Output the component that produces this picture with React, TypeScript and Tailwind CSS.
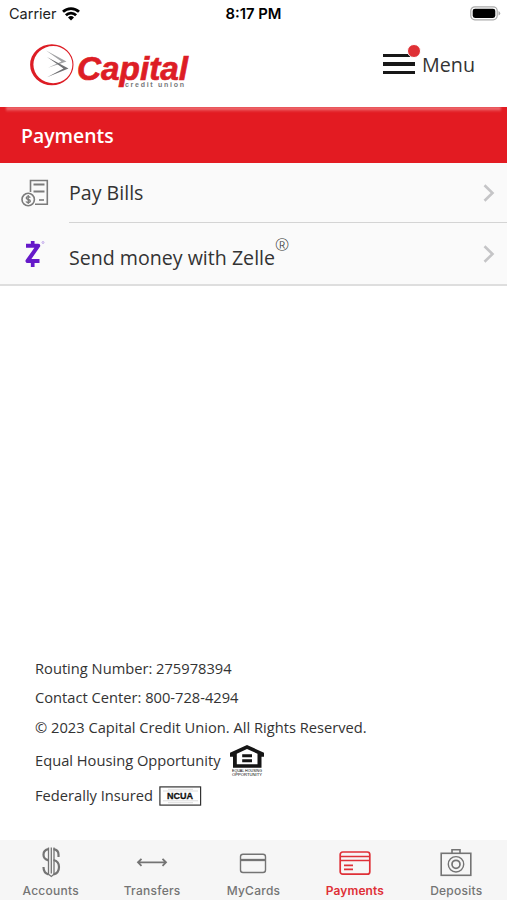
import React from 'react';

const Logo: React.FC = () => (
  <svg width="166" height="52" viewBox="0 0 166 52" className="block">
    <path
      fill="#dd1d25"
      fillRule="evenodd"
      d="M22.800 1.200a21.700 20.500 0 1 0 0 41a21.700 20.500 0 1 0 0-41M24.200 3a19.200 18.600 0 1 1 0 37.200a19.800 18.600 0 1 1 0-37.200"
    />
    <path fill="#a2a3a5" d="M17 7.500l20.500 11-18.500 6.200 13.500-6.200z" />
    <path fill="#6f7073" d="M18 14l21.500 11.500-21.500 8.800 16.500-8.800z" />
    <text
      x="48"
      y="37"
      textLength="111"
      lengthAdjust="spacingAndGlyphs"
      fill="#dd1d25"
      stroke="#dd1d25"
      strokeWidth=".7"
      className="font-['Liberation_Sans',sans-serif] text-[33.500px] font-bold italic"
    >
      Capital
    </text>
    <text
      x="96"
      y="44"
      textLength="59"
      fill="#77787b"
      className="font-['Liberation_Sans',sans-serif] text-[7px] font-bold"
    >
      credit union
    </text>
  </svg>
);

const WifiIcon: React.FC = () => (
  <svg width="18" height="14" viewBox="0 0 18 14" fill="none" stroke="#000" strokeWidth="2.700">
    <path d="M1 4.800a11.500 11.500 0 0 1 16 0" />
    <path d="M3.900 8.200a7.200 7.200 0 0 1 10.200 0" />
    <path d="M6 10.500a4.300 4.300 0 0 1 6 0L9 13.500z" fill="#000" stroke="none" />
  </svg>
);

const BatteryIcon: React.FC = () => (
  <svg width="31" height="15" viewBox="0 0 31 15">
    <rect x="0.800" y="0.800" width="26.400" height="13" rx="4" fill="#fff" stroke="#aaa" strokeWidth="1.200" />
    <rect x="2.700" y="2.700" width="22.600" height="9.200" rx="2.300" />
    <path d="M28.500 5v4.600q1.700-.7 1.700-2.300t-1.700-2.300" fill="#aaa" />
  </svg>
);

const BillIcon: React.FC = () => (
  <svg width="28" height="28" viewBox="0 0 28 28" fill="none" stroke="#7b7b7b" strokeWidth="1.600">
    <path d="M9.500 13V1.500h16.800v23.700H14" />
    <path d="M12.500 5.500h11M12.500 12.500h11" strokeWidth="2" />
    <path d="M18 21h5" />
    <circle cx="7.200" cy="20.500" r="6.200" />
    <path
      d="M9.300 18.600q-.6-1-2.100-1-2 0-2 1.400c0 1.100.9 1.300 2 1.500s2.100.5 2.100 1.600q0 1.400-2.100 1.400-1.600 0-2.300-1M7.200 16v9"
      strokeWidth="1.300"
    />
  </svg>
);

const ZelleIcon: React.FC = () => (
  <svg width="28" height="28" viewBox="0 0 28 28" fill="none" stroke="#6519c9" strokeLinejoin="round">
    <path d="M5 5.700h12.300L6.500 21h12" strokeWidth="4" />
    <path d="M11.700 1v5M11.700 21v6" strokeWidth="3.700" />
    <circle cx="22" cy="2.500" r="1" strokeWidth=".7" stroke="#aa88e5" />
  </svg>
);

const Chevron: React.FC = () => (
  <svg width="12" height="18" viewBox="0 0 12 18" fill="none" stroke="#c5c5c7" strokeWidth="2.600">
    <path d="M1.500 1.200L9.500 9l-8 7.800" />
  </svg>
);

const HousingIcon: React.FC = () => (
  <svg width="36" height="34" viewBox="0 0 36 34">
    <path
      fill="#151515"
      fillRule="evenodd"
      d="M18 1L1 8.700v4h3v11.100h28.500V12.700h2.500v-4zM18 5l10.500 4.800v10.400H7.800V9.800z"
    />
    <path fill="#151515" d="M13.200 10.300h9.800v2.900h-9.800zM13.200 15.300h9.800v2.900h-9.800z" />
    <text x="3" y="28.300" textLength="30" lengthAdjust="spacingAndGlyphs" className="font-['Liberation_Sans',sans-serif] text-[3.200px]">
      EQUAL HOUSING
    </text>
    <text x="3" y="32.300" textLength="30" lengthAdjust="spacingAndGlyphs" className="font-['Liberation_Sans',sans-serif] text-[3.200px]">
      OPPORTUNITY
    </text>
  </svg>
);

const NcuaIcon: React.FC = () => (
  <svg width="43" height="20" viewBox="0 0 43 20" fill="none" stroke="#333">
    <rect x="0.900" y="0.900" width="40.700" height="18.200" strokeWidth="1.200" />
    <path d="M4 5h35M9 3.300h25M4 14.800h35M9 16.700h25" strokeWidth=".4" stroke="#aaa" />
    <text
      x="8"
      y="13.200"
      textLength="26"
      lengthAdjust="spacingAndGlyphs"
      fill="#111"
      stroke="#111"
      strokeWidth=".3"
      className="font-['Liberation_Sans',sans-serif] text-[9px] font-bold"
    >
      NCUA
    </text>
  </svg>
);

const tabs = [
  {
    label: 'Accounts',
    active: false,
    icon: (
      <>
        <path
          d="M23.500 12V9.500Q23.500 5 18.500 4.200M13.500 4.200Q8.500 5 8.500 9.800q0 4.500 5 5.500M18.500 15q5.500 1.200 5.500 7 0 6-5.500 7.500M8.500 22q0 6 5 7.500"
          strokeWidth="2.200"
        />
        <path d="M13.500 2.500v26.700l2.800 2.300 2.700-2.300V2.500M16.300 2.500v26" strokeWidth="1.300" />
      </>
    ),
  },
  {
    label: 'Transfers',
    active: false,
    icon: <path d="M2 17.300h28M5.500 13.800l-3.500 3.500 3.500 3.500M26.500 13.800l3.500 3.500-3.500 3.500" strokeWidth="1.800" />,
  },
  {
    label: 'MyCards',
    active: false,
    icon: (
      <>
        <rect x="3.500" y="9.200" width="25" height="18.300" rx="2.500" />
        <path d="M3.500 15h25" strokeWidth="2.300" />
      </>
    ),
  },
  {
    label: 'Payments',
    active: true,
    icon: (
      <>
        <rect x="1.200" y="7" width="29.600" height="22.200" rx="2.500" strokeWidth="1.700" />
        <path d="M1 11.500h30M1 15.500h30M5 20.300h9M5 24.300h9" strokeWidth="1.700" />
      </>
    ),
  },
  {
    label: 'Deposits',
    active: false,
    icon: (
      <>
        <rect x="1.200" y="8.300" width="29.600" height="22" strokeWidth="1.600" />
        <path d="M12 8.300V4.800h8v3.500" strokeWidth="1.600" />
        <circle cx="16" cy="19.300" r="7.700" />
        <circle cx="16" cy="19.300" r="4" strokeWidth="1.700" />
      </>
    ),
  },
];

const App: React.FC = () => {
  return (
    <div className="flex h-[900px] w-[507px] flex-col overflow-hidden bg-white font-['Open_Sans',sans-serif] text-[#333]">
      <div className="grid h-7 grid-cols-3 items-center font-['Inter',sans-serif] text-[14px] leading-none text-black">
        <div className="flex items-center gap-[5px] pl-[9px]">
          <span className="text-[14.500px] text-[#222]">Carrier</span>
          <WifiIcon />
        </div>
        <span className="text-center text-[14.800px] font-semibold">8:17 PM</span>
        <div className="flex justify-end pr-[6px] pb-[2px]">
          <BatteryIcon />
        </div>
      </div>

      <header className="flex h-[79px] justify-between pt-[15px] pr-8 pl-[29px]">
        <Logo />
        <div className="flex h-[42px] items-center gap-[7px]">
          <div className="relative flex w-8 flex-col gap-[5.500px]">
            <span className="h-[3.300px] bg-[#171717]" />
            <span className="h-[3.300px] bg-[#171717]" />
            <span className="h-[3.300px] bg-[#171717]" />
            <span className="absolute -top-[10px] left-[24px] size-[14px] rounded-full border border-white bg-[#df3035]" />
          </div>
          <span className="pt-px text-[19.700px]">Menu</span>
        </div>
      </header>

      <div className="relative flex h-14 items-center bg-[#e31b22] pl-[21px]">
        <div className="absolute inset-x-[6px] top-0 h-[5px] bg-linear-to-b from-white/50 to-transparent blur-[1px]" />
        <h1 className="pt-[2px] text-[19.400px] font-semibold text-white">Payments</h1>
      </div>

      <main className="h-[123px] border-b-2 border-[#dedede] bg-[#fafafa]">
        <div className="flex h-[60px] items-center pl-[21px]">
          <BillIcon />
          <div className="ml-5 flex h-full flex-1 items-center justify-between border-b border-[#d4d4d4] pt-px pr-3">
            <span className="text-[19.600px]">Pay Bills</span>
            <Chevron />
          </div>
        </div>
        <div className="flex h-[62px] items-center pl-[21px]">
          <ZelleIcon />
          <div className="ml-5 flex flex-1 items-center justify-between pr-3">
            <span className="pt-[7px] text-[19.600px]">
              Send money with Zelle<sup className="-top-[0.820em] text-[17px] font-light">®</sup>
            </span>
            <Chevron />
          </div>
        </div>
      </main>

      <footer className="mt-auto mb-[27px] pl-[35px] text-[14.680px] leading-[29.300px]">
        <div className="mb-px">
          <p>Routing Number: 275978394</p>
          <p>Contact Center: 800-728-4294</p>
          <p>© 2023 Capital Credit Union. All Rights Reserved.</p>
        </div>
        <div className="flex h-[35px] items-center gap-2">
          <span className="pt-px">Equal Housing Opportunity</span>
          <HousingIcon />
        </div>
        <div className="flex h-[35px] items-center gap-[6px]">
          <span>Federally Insured</span>
          <NcuaIcon />
        </div>
      </footer>

      <nav className="grid h-[60px] shrink-0 grid-cols-5 bg-[#f6f6f6]">
        {tabs.map((tab) => (
          <div
            key={tab.label}
            className={`flex flex-col items-center pt-[5px] ${tab.active ? 'text-[#df3037]' : 'text-[#747474]'}`}
          >
            <svg width="32" height="34" viewBox="0 0 32 34" fill="none" stroke="currentColor" strokeWidth="1.400">
              {tab.icon}
            </svg>
            <span
              className={`mt-[4px] font-['Inter',sans-serif] text-[12px] leading-4 ${tab.active ? 'font-semibold tracking-[0.100px]' : 'font-medium tracking-[0.250px]'}`}
            >
              {tab.label}
            </span>
          </div>
        ))}
      </nav>
    </div>
  );
};

export default App;
